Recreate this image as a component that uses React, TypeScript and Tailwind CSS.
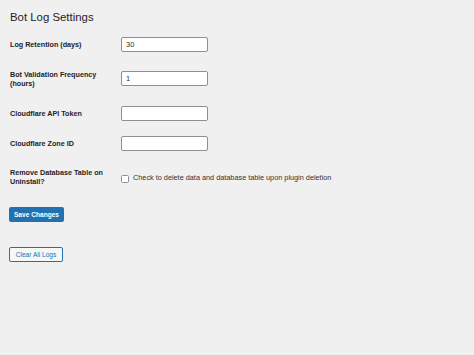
import { useState } from "react";

const labelCls = "w-[121px] shrink-0 pl-[10px] pr-2 text-[7.2px] leading-[9px] font-semibold text-[#1d2327]";
const inputCls =
  "h-[15px] w-[87px] rounded-[2px] border border-[#8c8f94] bg-white px-[4px] text-[7.5px] text-[#2c3338] outline-none";

function TextRow({ label, value, className }: { label: React.ReactNode; value: string; className: string }) {
  const [v, setV] = useState(value);
  return (
    <div className={`flex items-center ${className}`}>
      <div className={labelCls}>{label}</div>
      <input className={inputCls} value={v} onChange={(e) => setV(e.target.value)} />
    </div>
  );
}

export default function App() {
  const [checked, setChecked] = useState(false);

  return (
    <div
      className="min-h-[355px] w-full bg-[#f0f0f1] text-[#1d2327]"
      style={{ fontFamily: '"Liberation Sans", Arial, sans-serif' }}
    >
      <h1 className="pl-[10px] pt-[9px] text-[11.4px] leading-[16px] font-normal text-[#1d2327]">Bot Log Settings</h1>

      <TextRow className="mt-[12px]" label="Log Retention (days)" value="30" />
      <TextRow
        className="mt-[17.5px]"
        label={
          <>
            Bot Validation Frequency
            <br />
            (hours)
          </>
        }
        value="1"
      />
      <TextRow className="mt-[18px]" label="Cloudflare API Token" value="" />
      <TextRow className="mt-[15px]" label="Cloudflare Zone ID" value="" />

      <div className="mt-[17.5px] flex items-center">
        <div className={labelCls}>
          Remove Database Table on
          <br />
          Uninstall?
        </div>
        <label className="mt-[1px] flex items-center gap-[4px] text-[7.3px] leading-[9px] text-[#2c3338]">
          <span
            onClick={() => setChecked(!checked)}
            className="mt-[2px] h-[8px] w-[8px] rounded-[1.5px] border border-[#8c8f94] bg-white"
          />
          <span>Check to delete data and database table upon plugin deletion</span>
        </label>
      </div>

      <div className="mt-[21px] flex pl-[9px]">
        <button className="h-[15px] w-[55px] rounded-[2px] bg-[#2271b1] text-[6.6px] font-semibold text-white">
          Save Changes
        </button>
      </div>

      <div className="mt-[25px] flex pl-[9px]">
        <button className="h-[15px] w-[54px] rounded-[2px] border border-[#2271b1] bg-[#f6f7f7] text-[6.6px] text-[#2271b1]">
          Clear All Logs
        </button>
      </div>
    </div>
  );
}
